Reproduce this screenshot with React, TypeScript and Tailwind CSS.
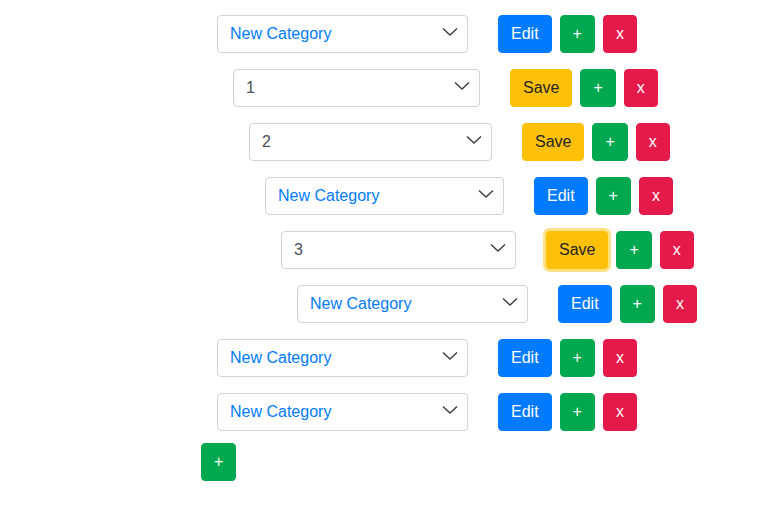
import React from 'react';

type Node = {
  value: string;
  editing?: boolean;
  focused?: boolean;
  width: number;
  children?: Node[];
};

const tree: Node[] = [
  {
    value: 'New Category',
    width: 251,
    children: [
      {
        value: '1',
        editing: true,
        width: 247,
        children: [
          {
            value: '2',
            editing: true,
            width: 243,
            children: [
              {
                value: 'New Category',
                width: 239,
                children: [
                  {
                    value: '3',
                    editing: true,
                    focused: true,
                    width: 235,
                    children: [{ value: 'New Category', width: 231 }],
                  },
                ],
              },
            ],
          },
        ],
      },
    ],
  },
  { value: 'New Category', width: 251 },
  { value: 'New Category', width: 251 },
];

const btn = 'h-[38px] px-3 border rounded-[4px] text-base leading-6';

function Chevron() {
  return (
    <svg className="absolute right-[10px] top-[12px] pointer-events-none" width="16" height="10" viewBox="0 0 16 10" fill="none">
      <path d="M1 1.5 L8 8 L15 1.5" stroke="#343a40" strokeWidth="1.3" />
    </svg>
  );
}

function Row({ node }: { node: Node }) {
  const isNew = node.value === 'New Category';
  return (
    <div className="ml-4 flex flex-col gap-4">
      <div className="flex items-center">
        <div className="relative" style={{ width: node.width }}>
          <div
            className={`h-[38px] w-full border border-[#ced4da] rounded-[4px] bg-white pl-3 pr-8 flex items-center text-base ${
              isNew ? 'text-[#007bff]' : 'text-[#495057]'
            }`}
          >
            {node.value}
          </div>
          <Chevron />
        </div>
        <div className="ml-[30px] flex items-center gap-2">
          {node.editing ? (
            <button
              className={`${btn} bg-[#ffc107] border-[#ffc107] text-[#212529] ${
                node.focused ? 'shadow-[0_0_0_3px_#ffe083]' : ''
              }`}
            >
              Save
            </button>
          ) : (
            <button className={`${btn} bg-[#007bff] border-[#007bff] text-white`}>Edit</button>
          )}
          <button className={`${btn} bg-[#00a84f] border-[#00a84f] text-white`}>+</button>
          <button className={`${btn} bg-[#e6194b] border-[#e6194b] text-white`}>x</button>
        </div>
      </div>
      {node.children?.map((c, i) => <Row key={i} node={c} />)}
    </div>
  );
}

export default function App() {
  return (
    <div className="min-h-[520px] w-full bg-white font-['Liberation_Sans',Arial,sans-serif]">
      <div className="pl-[201px] pt-[15px] flex flex-col">
        <div className="flex flex-col gap-4">
          {tree.map((n, i) => (
            <Row key={i} node={n} />
          ))}
        </div>
        <div className="mt-3">
          <button className={`${btn} bg-[#00a84f] border-[#00a84f] text-white`}>+</button>
        </div>
      </div>
    </div>
  );
}
